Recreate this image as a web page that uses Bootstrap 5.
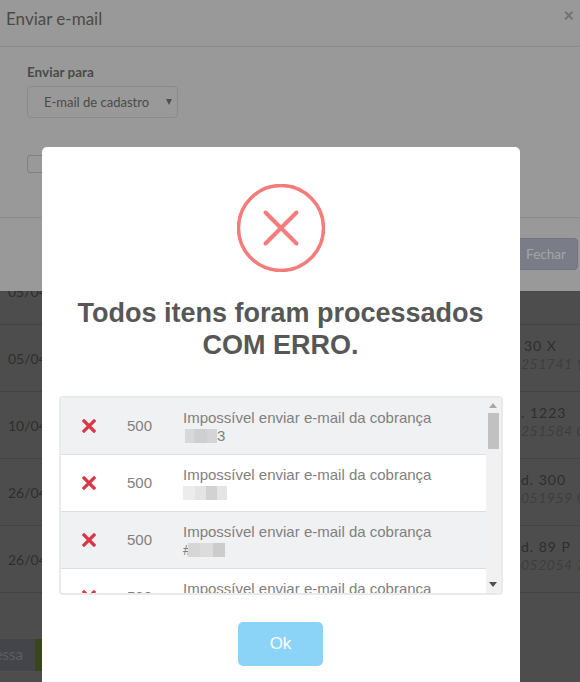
<!DOCTYPE html>
<html lang="pt-BR">
<head>
<meta charset="utf-8">
<title>Enviar e-mail</title>
<link rel="stylesheet" href="https://cdn.jsdelivr.net/npm/bootstrap@5.3.0/dist/css/bootstrap.min.css">
<style>
html,body{height:682px;overflow:hidden}
body{position:relative;background:#4d4d4d;font-family:Lato,"Liberation Sans",sans-serif;color:#2b2b2b}
.bg-page{height:682px;padding-top:258px;overflow:hidden}
.bg-row{height:67px;border-bottom:1px solid #434343;padding-left:8px;display:flex;justify-content:space-between;white-space:nowrap;overflow:hidden;font-size:14px}
.bg-date{align-self:center;color:#2e2e2e}
.bg-note{width:59px;flex:none;padding-top:12px;line-height:18px;color:#2e2e2e;overflow:hidden;letter-spacing:1px}
.bg-note i{display:block;color:#3e3e3e;font-size:14px;letter-spacing:.5px}
.bg-note-first{padding-top:0;margin-top:-5px}
.bg-indent{padding-left:3px}
.bg-btns{display:flex;height:32px;margin-top:46px;font-size:15px}
.bg-btn1{width:35px;background:#43454a;color:#5c5e62;line-height:31px;padding-right:12px;overflow:hidden;display:flex;justify-content:flex-end}
.bg-btn2{width:7px;background:#39451f}
.first-modal{position:absolute;left:0;right:0;top:0;height:291px;background:#999;color:#4a4a4a}
.fm-head{height:47px;border-bottom:1px solid #8a8a8a;padding:7px 6px;font-size:17px;line-height:24px}
.fm-x{position:absolute;right:6px;top:8px;font-size:18px;line-height:14px;color:#6f6f6f;font-weight:700}
.fm-body{height:171px;border-bottom:1px solid #8a8a8a;padding:16px 27px}
.fm-label{font-size:13.5px;font-weight:700;line-height:18px;margin-bottom:5px}
.fm-select{width:151px;height:32px;border:1px solid #8a8a8a;border-radius:4px;font-size:13px;line-height:30px;padding-left:16px;position:relative}
.fm-select::after{content:"";position:absolute;right:5px;top:12px;border:3px solid transparent;border-top:6px solid #4f4f4f;border-bottom:0}
.fm-check{width:30px;height:18px;border:1px solid #808080;border-radius:3px;margin-top:37px}
.fm-foot{padding:20px 2px 0 0;display:flex;justify-content:flex-end}
.fm-close{width:64px;height:32px;border-radius:4px;background:#7a7d87;border:1px solid #71747e;color:#a3a5ab;font-size:13.5px;line-height:30px;text-align:center}
.alert-box{position:absolute;left:42px;top:147px;width:478px;height:560px;background:#fff;border-radius:5px;padding:37px 18px 0 17px;font-family:"Liberation Sans",sans-serif}
.alert-icon{display:block;width:88px;height:88px;margin-left:178px}
.alert-title{font-size:27px;font-weight:700;line-height:32px;color:#575757;text-align:center;margin:25px 0 0}
.result-list{margin-top:35px;height:199px;width:444px;border:2px solid #e9eaec;border-radius:4px;overflow:hidden;display:flex}
.result-rows{flex:1;min-width:0;overflow:hidden}
.result-row{height:57px;border-bottom:1px solid #dedede;display:flex;align-items:center;color:#808080;font-size:15px;line-height:18px;background:#fff}
.result-row:nth-child(odd){background:#f0f1f3}
.result-x{width:55px;flex:none}
.result-x svg{display:block;margin-left:21px}
.result-code{width:67px;flex:none;padding-left:11px}
.result-msg{flex:1;padding-right:20px;padding-top:1px}
.smudge{display:inline-flex;height:14px;vertical-align:-2px}
.smudge-tight{margin-left:-3px}
.smudge-in{margin-left:2px}
.smudge b{display:block;height:14px}
.fake-bar{width:15px;flex:none;background:#f1f1f1;position:relative;padding-top:15px}
.fake-thumb{height:36px;width:11px;margin-left:2px;background:#c1c1c1}
.arrow-up,.arrow-down{position:absolute;left:3px;border:4px solid transparent}
.arrow-up{top:5px;border-top:0;border-bottom:5px solid #a8a8a8}
.arrow-down{bottom:6px;border-bottom:0;border-top:5px solid #505050}
.ok-wrap{text-align:center;margin-top:27px}
.ok-btn{width:85px;height:44px;background:#8cd4f7;border:0;border-radius:5px;color:#fff;font-size:17px;padding:0;line-height:44px}
.ok-btn:hover{background:#8cd4f7;color:#fff}
.s1{width:9px;background:#d8d8d8}.s2{width:13px;background:#cfcfcf}.s3{width:10px;background:#d4d4d4}
.s4{width:12px;background:#ececec}.s5{width:11px;background:#e4e4e4}.s6{width:11px;background:#d2d2d2}.s7{width:10px;background:#e4e4e4}
.s8{width:12px;background:#d6d6d6}.s9{width:13px;background:#dcdcdc}.s10{width:12px;background:#ccc}
.s11{width:40px;background:#e0e0e0}
</style>
</head>
<body>
<div class="bg-page">
  <div class="bg-row"><span class="bg-date">05/04</span><span class="bg-note bg-note-first"><i>251738 9</i></span></div>
  <div class="bg-row"><span class="bg-date">05/04</span><span class="bg-note"><span class="bg-indent">30 X</span><i>251741 9</i></span></div>
  <div class="bg-row"><span class="bg-date">10/04</span><span class="bg-note">. 1223<i>251584 0</i></span></div>
  <div class="bg-row"><span class="bg-date">26/04</span><span class="bg-note">d. 300<i>051959 0</i></span></div>
  <div class="bg-row"><span class="bg-date">26/04</span><span class="bg-note">d. 89 P<i>052054 7</i></span></div>
  <div class="bg-btns"><span class="bg-btn1">essa</span><span class="bg-btn2"></span></div>
</div>

<div class="first-modal">
  <div class="fm-head">Enviar e-mail</div>
  <span class="fm-x">&times;</span>
  <div class="fm-body">
    <div class="fm-label">Enviar para</div>
    <div class="fm-select">E-mail de cadastro</div>
    <div class="fm-check"></div>
  </div>
  <div class="fm-foot"><div class="fm-close">Fechar</div></div>
</div>

<div class="alert-box">
  <svg class="alert-icon" viewBox="0 0 88 88" fill="none">
    <circle cx="44" cy="44" r="42.5" stroke-width="3.5" stroke="#f67b7b"/>
    <path d="M28.5 28.5 59.5 59.5M59.5 28.5 28.5 59.5" stroke-width="4" stroke-linecap="round" stroke="#f67b7b"/>
  </svg>
  <h2 class="alert-title">Todos itens foram processados<br>COM ERRO.</h2>
  <div class="result-list">
    <div class="result-rows">
      <div class="result-row">
        <div class="result-x"><svg width="14" height="14" viewBox="0 0 14 14"><path d="M2 2 12 12M12 2 2 12" stroke="#dc3545" stroke-width="3.2" stroke-linecap="square"/></svg></div>
        <div class="result-code">500</div>
        <div class="result-msg">Impossível enviar e-mail da cobrança<br><span class="smudge smudge-in"><b class="s1"></b><b class="s2"></b><b class="s3"></b></span>3</div>
      </div>
      <div class="result-row">
        <div class="result-x"><svg width="14" height="14" viewBox="0 0 14 14"><path d="M2 2 12 12M12 2 2 12" stroke="#dc3545" stroke-width="3.2" stroke-linecap="square"/></svg></div>
        <div class="result-code">500</div>
        <div class="result-msg">Impossível enviar e-mail da cobrança<br><span class="smudge"><b class="s4"></b><b class="s5"></b><b class="s6"></b><b class="s7"></b></span></div>
      </div>
      <div class="result-row">
        <div class="result-x"><svg width="14" height="14" viewBox="0 0 14 14"><path d="M2 2 12 12M12 2 2 12" stroke="#dc3545" stroke-width="3.2" stroke-linecap="square"/></svg></div>
        <div class="result-code">500</div>
        <div class="result-msg">Impossível enviar e-mail da cobrança<br>#<span class="smudge smudge-tight"><b class="s8"></b><b class="s9"></b><b class="s10"></b></span></div>
      </div>
      <div class="result-row">
        <div class="result-x"><svg width="14" height="14" viewBox="0 0 14 14"><path d="M2 2 12 12M12 2 2 12" stroke="#dc3545" stroke-width="3.2" stroke-linecap="square"/></svg></div>
        <div class="result-code">500</div>
        <div class="result-msg">Impossível enviar e-mail da cobrança<br><span class="smudge"><b class="s11"></b></span></div>
      </div>
    </div>
    <div class="fake-bar"><span class="arrow-up"></span><div class="fake-thumb"></div><span class="arrow-down"></span></div>
  </div>
  <div class="ok-wrap"><button type="button" class="btn ok-btn">Ok</button></div>
</div>
<script src="https://cdn.jsdelivr.net/npm/bootstrap@5.3.0/dist/js/bootstrap.bundle.min.js"></script>
</body>
</html>
